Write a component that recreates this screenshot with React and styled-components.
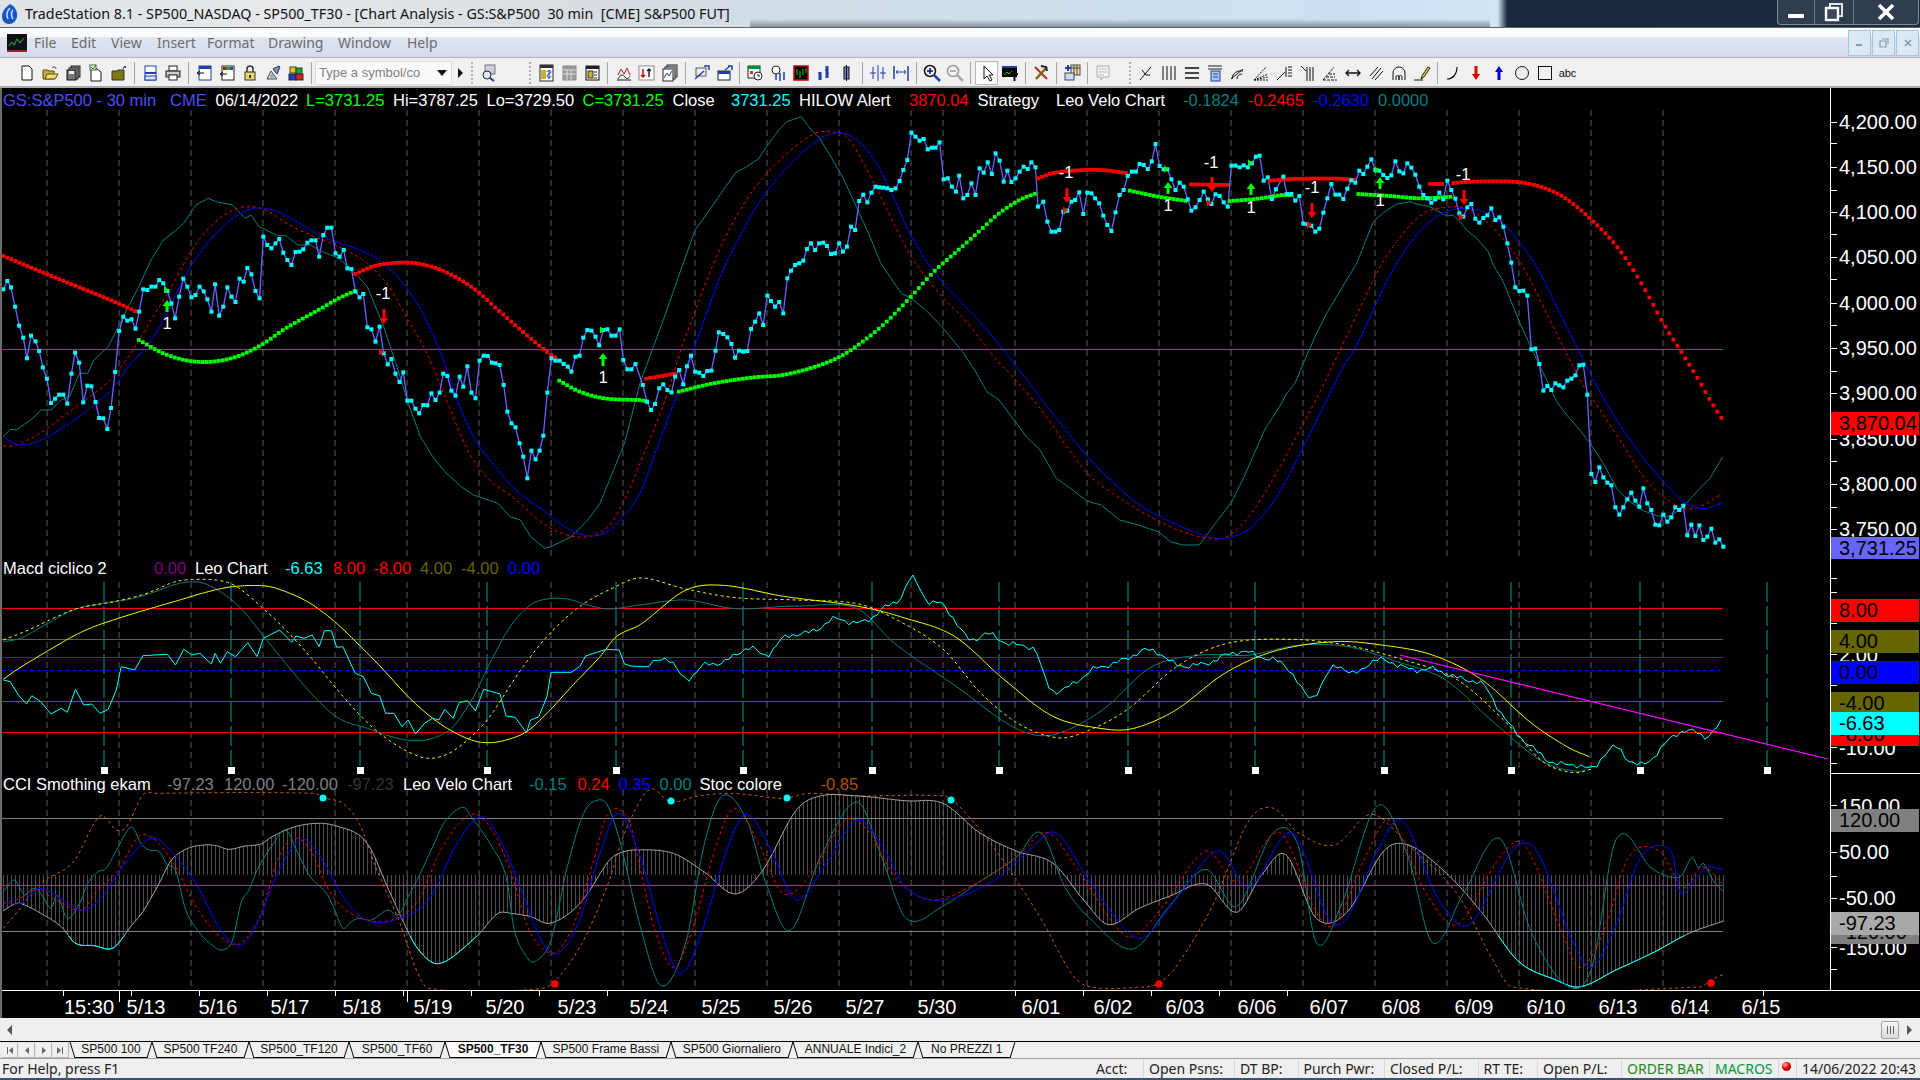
import React from "react";
import styled, { createGlobalStyle } from "styled-components";

const GlobalStyle = createGlobalStyle`
  html, body { margin: 0; padding: 0; background: #000; }
  body { font-family: "Liberation Sans", Arial, sans-serif; }
`;

// ---- data helpers: points were read off zoomed crops of the chart
const parse = (s) => s.trim().split(/\s+/).map((p) => p.split(",").map(Number));
const upL = (s) => parse(s).map(([x, y]) => [x / 2.45, 90 + y / 3]);
const upM = (s) => parse(s).map(([x, y]) => [640 + x / 2.45, 90 + y / 3]);
const upR = (s) => parse(s).map(([x, y]) => [1240 + x / 3, 90 + y / 3]);
const low = (s) => parse(s).map(([x, y]) => [x / 2.45, 550 + y / 3]);
const full = (s) => parse(s).map(([x, y]) => [x * 1.2245, y * 1.2245]);
const str = (pts) => pts.map(([x, y]) => `${x.toFixed(1)},${y.toFixed(1)}`).join(" ");

const at = (pts, x) => {
  for (let i = 1; i < pts.length; i++) {
    if (x <= pts[i][0]) {
      const [x0, y0] = pts[i - 1];
      const [x1, y1] = pts[i];
      return y0 + ((y1 - y0) * (x - x0)) / (x1 - x0 || 1);
    }
  }
  return pts[pts.length - 1][1];
};
const along = (pts, step = 4) => {
  const out = [];
  for (let x = pts[0][0]; x <= pts[pts.length - 1][0]; x += step) out.push([x, at(pts, x)]);
  return out;
};

// hermite through the read-off points, so the averages are curves and not corners
const smooth = (pts, step = 2) => {
  const slope = (i) => {
    const a = pts[Math.max(i - 1, 0)];
    const b = pts[Math.min(i + 1, pts.length - 1)];
    return (b[1] - a[1]) / (b[0] - a[0] || 1);
  };
  const out = [];
  for (let i = 0; i < pts.length - 1; i++) {
    const [x0, y0] = pts[i];
    const [x1, y1] = pts[i + 1];
    const dx = x1 - x0;
    const n = Math.max(1, Math.ceil(dx / step));
    for (let k = 0; k < n; k++) {
      const t = k / n;
      const h00 = 2 * t ** 3 - 3 * t ** 2 + 1;
      const h10 = t ** 3 - 2 * t ** 2 + t;
      const h01 = -2 * t ** 3 + 3 * t ** 2;
      const h11 = t ** 3 - t ** 2;
      out.push([x0 + t * dx, h00 * y0 + h10 * dx * slope(i) + h01 * y1 + h11 * dx * slope(i + 1)]);
    }
  }
  out.push(pts[pts.length - 1]);
  return out;
};

// the raw oscillators are noisy bar to bar
const rough = (pts, amp) =>
  along(smooth(pts), 4).map(([x, y]) => [x, y + amp * (Math.sin(x * 1.7) + Math.sin(x * 0.63 + 1) + Math.sin(x * 2.9 + 2)) / 2]);

const price = [
  ...upL(`8,598 18,573 27,592 37,650 47,707 57,743 66,805 76,737 87,754 96,783 105,832 115,866 125,939 135,926 145,914 155,914 165,941 175,851 184,788 194,818 204,937 214,887 224,889 234,936 243,984 253,985 263,1017 272,954 282,846 292,723 302,680 312,692 322,688 332,716 341,665 351,598 361,600 371,590 381,590 390,570 400,580 410,603 420,640 429,685 439,620 449,566 459,590 469,622 479,615 489,590 499,604 508,628 518,665 527,583 537,677 547,650 557,592 567,620 577,636 587,566 597,575 606,534 616,553 626,603 636,625 645,440 655,465 665,475 675,460 684,447 694,488 704,510 714,525 724,486 734,485 743,478 753,458 763,451 773,451 782,500 792,435 802,413 812,413 822,490 832,500 842,480 851,535 861,537 871,605 881,622 890,612 900,712 910,718 920,755 930,710 940,790 950,823 959,807 969,851 979,876 988,847 998,932 1008,932 1018,956 1027,970 1037,945 1047,946 1057,910 1067,930 1077,908 1086,851 1096,858 1106,902 1116,917 1126,860 1135,890 1145,829 1155,908 1165,925 1175,812 1185,797 1195,798 1205,818 1214,820 1224,825 1234,885 1243,965 1253,1000 1263,1012 1273,1060 1282,1100 1292,1165 1302,1082 1312,1108 1322,1082 1331,1037 1341,908 1351,805 1361,812 1371,812 1381,822 1391,830 1400,845 1410,800 1420,797 1429,743 1439,720 1449,722 1459,740 1468,766 1478,720 1488,718 1498,737 1508,737 1518,718 1527,810 1537,838 1547,838 1557,822`),
  ...upM(`7,885 17,935 27,960 37,942 47,895 57,883 67,900 77,907 86,860 96,840 106,883 115,829 125,797 135,845 145,848 155,858 165,843 175,842 185,782 193,727 204,732 214,742 224,762 233,803 243,782 253,785 263,783 272,717 282,695 292,670 302,705 312,617 321,633 331,650 341,636 351,670 361,565 370,542 380,525 390,520 400,512 409,477 419,460 429,480 439,460 449,458 458,468 468,492 478,490 488,460 497,485 507,470 517,410 527,420 537,333 547,314 557,337 567,308 577,290 586,292 596,293 606,295 616,300 626,295 636,273 645,240 655,210 665,128 675,140 685,152 695,147 705,178 715,173 724,173 734,157 744,268 754,265 764,290 774,305 782,257 792,325 802,315 812,280 822,315 832,235 842,248 852,217 862,252 871,190 881,212 891,275 900,242 910,276 920,265 930,245 940,230 950,237 959,217 969,232 975,350 988,335 998,395 1008,425 1018,425 1027,420 1037,365 1047,362 1057,335 1066,330 1076,307 1086,372 1096,308 1106,310 1115,325 1125,340 1135,377 1145,405 1155,423 1165,367 1175,315 1185,300 1195,258 1205,245 1215,245 1224,222 1234,225 1244,237 1254,214 1263,162 1273,228 1283,238 1292,238 1302,268 1312,300 1322,278 1332,290 1342,328 1351,362 1361,352 1371,330 1381,305 1391,328 1400,342 1410,313 1420,318 1430,337 1440,350 1449,227 1459,227 1469,232 1479,226 1489,232 1499,220 1509,200 1518,197 1528,272 1538,262 1548,327 1558,298`),
  ...upR(`130,260 141,312 154,312 166,332 178,318 190,401 202,403 214,407 226,425 238,416 250,368 262,325 274,282 286,314 298,314 310,327 322,296 334,271 346,278 358,242 370,252 382,230 394,208 406,240 418,242 430,255 442,264 454,256 466,214 478,244 490,250 502,220 514,233 526,254 538,290 550,315 562,325 574,338 586,328 598,308 610,328 622,272 634,300 646,326 658,370 670,380 682,352 694,342 706,386 718,398 730,384 742,376 754,355 766,390 778,382 790,410 802,460 814,518 826,592 838,603 850,602 862,617 874,778 886,776 898,822 910,902 922,888 934,900 946,880 958,886 970,892 982,872 994,866 1006,856 1018,826 1030,824 1042,914 1054,1152 1066,1176 1078,1132 1090,1162 1102,1178 1114,1186 1126,1252 1138,1274 1150,1252 1162,1228 1174,1208 1186,1232 1198,1250 1210,1195 1222,1240 1234,1260 1246,1304 1258,1306 1270,1274 1282,1295 1294,1282 1306,1252 1318,1260 1330,1247 1342,1336 1354,1304 1366,1338 1378,1306 1390,1350 1402,1340 1414,1316 1426,1358 1438,1348 1450,1370`),
];

const priceTeal = [
  ...upL(`8,1040 25,1018 40,1020 60,1003 80,985 100,960 125,960 150,930 170,920 195,850 215,850 230,810 265,770 290,710 310,660 340,590 370,510 400,450 430,422 450,400 480,345 510,325 530,335 570,345 600,385 615,375 635,410 680,437 700,437 730,465 760,465 790,485 830,505 870,550 900,590 925,665 940,710 970,820 1000,940 1030,1040 1060,1100 1090,1145 1130,1190 1160,1215 1220,1240 1250,1280 1275,1290 1300,1340 1335,1375 1350,1370 1400,1340 1440,1290 1470,1240 1500,1150 1530,1060`),
  ...upM(`0,880 30,780 60,680 100,540 135,420 165,370 190,325 210,290 235,247 255,235 290,207 310,170 340,120 360,95 395,80 420,120 440,145 470,205 500,270 530,350 560,430 590,520 640,610 665,625 700,660 740,710 790,785 820,840 850,905 880,930 910,980 950,1045 980,1080 1020,1165 1060,1200 1095,1233 1130,1245 1175,1290 1215,1303 1270,1325 1300,1355 1330,1365 1370,1365 1410,1300 1450,1235 1480,1160 1530,1020`),
  ...upR(`120,948 140,910 165,880 190,820 225,740 260,670 290,620 320,570 350,520 370,470 400,395 430,368 470,342 510,335 530,342 570,350 620,378 640,375 660,395 680,420 710,445 745,485 760,525 790,575 820,650 840,700 870,765 900,830 920,870 950,935 980,975 1020,1020 1050,1060 1090,1120 1130,1195 1170,1235 1210,1262 1250,1277 1290,1280 1330,1250 1380,1195 1410,1165 1448,1100`),
];
const priceBlue = smooth([
  ...upL(`8,1042 40,1063 70,1062 110,1045 150,1015 200,975 240,935 280,890 320,820 360,770 400,690 440,590 480,505 530,430 570,385 610,358 650,355 690,370 740,405 800,445 860,470 900,490 950,530 1000,600 1040,680 1080,790 1120,930 1160,1040 1200,1110 1260,1195 1330,1260 1390,1315 1440,1337 1480,1330 1520,1290`),
  ...upM(`0,1210 40,1080 80,950 120,820 160,680 200,550 240,450 280,360 320,290 370,220 420,165 460,135 500,130 540,160 580,220 620,320 670,450 730,560 790,640 850,720 910,810 960,890 1030,1000 1100,1105 1170,1190 1230,1250 1300,1295 1380,1335 1430,1345 1490,1320 1530,1270`),
  ...upR(`120,1205 190,1070 250,950 310,830 345,775 400,660 450,555 510,460 570,395 620,365 680,355 730,365 790,400 840,460 890,530 950,650 1010,770 1060,870 1130,990 1200,1090 1270,1175 1330,1235 1380,1255 1410,1253 1448,1237`),
]);
const priceRed = smooth([
  ...upL(`8,1068 30,1068 60,1055 110,1020 170,965 220,920 270,870 320,790 370,690 420,590 470,480 520,405 570,360 610,350 650,360 710,405 770,440 830,470 900,520 950,585 1000,690 1050,800 1100,950 1150,1090 1200,1170 1260,1225 1330,1300 1390,1335 1440,1340 1490,1310 1530,1230`),
  ...upM(`0,1120 40,1000 70,900 100,780 130,680 170,550 210,440 250,350 300,265 370,180 430,130 470,125 510,145 550,225 590,320 630,420 670,510 740,620 800,695 860,790 920,870 990,970 1040,1060 1100,1155 1170,1220 1250,1280 1330,1325 1420,1347 1470,1310 1520,1230`),
  ...upR(`120,1130 185,1010 240,905 300,780 360,655 420,530 490,430 550,370 610,353 680,355 740,395 800,460 860,550 920,670 980,790 1020,870 1080,960 1140,1050 1210,1160 1270,1220 1330,1255 1380,1250 1448,1210`),
]);

const redDots = [
  upL("8,498 100,545 200,595 280,635 340,668"),
  upL("870,552 920,527 980,518 1030,522 1090,545 1160,595 1220,660 1290,735 1350,795 1365,805"),
  upM("15,866 90,850"),
  upM("975,265 1010,250 1060,242 1130,240 1195,250"),
  upM("1350,283 1440,285"),
  upR("90,272 160,267 290,266 350,270"),
  upR("570,282 615,282"),
  upR("640,279 700,275 830,276 900,290 960,315 1010,350 1060,395 1110,445 1160,510 1210,590 1270,700 1320,780 1370,860 1410,930 1450,993"),
];
const greenDots = [
  upL("340,750 400,790 460,812 520,815 580,800 640,765 700,715 780,660 830,625 870,603"),
  [...upL("1370,872 1420,905 1480,925 1560,930"), ...upM("0,930 18,935")],
  upM("95,905 180,880 280,862 350,855 430,830 490,800 540,760 600,700 660,625 720,545 780,480 830,425 880,370 930,330 970,310"),
  upM("1200,302 1270,320 1340,333"),
  [...upM("1445,333 1500,328 1548,320"), ...upR("128,315 156,316")],
  upR("355,312 450,318 540,325 640,320"),
];

// ---- macd pane
const macdYellow = smooth([
  ...low("8,388 40,360 100,315 170,265 220,235 290,205 370,175 440,150 510,125 570,110 650,108 700,125 760,160 820,215 880,285 940,360 1000,440 1060,505 1110,545 1160,572 1200,578 1240,570 1290,545 1340,490 1400,410 1470,320 1510,260"),
  ...full("523,510 560,482 590,478 640,487 700,495 740,505 780,520 820,555 860,585 900,595 925,595 960,580 1000,550 1040,532 1090,524 1130,527 1170,535 1210,555 1250,590 1280,610 1298,618"),
]);
const macdYellowDash = smooth([
  ...low("8,270 70,240 130,205 190,175 280,155 360,130 430,95 490,88 540,92 580,110 640,170 700,240 760,320 810,395 870,480 930,550 1000,605 1050,625 1100,610 1150,565 1200,500 1270,370 1340,260 1420,170 1500,115"),
  ...full("523,472 560,481 600,488 650,490 700,493 730,505 770,530 800,565 830,590 860,602 880,600 920,580 960,545 1000,526 1050,522 1100,527 1150,540 1190,555 1230,590 1260,622 1285,631 1300,628"),
]);
const macdTeal = smooth([
  ...low("8,275 50,265 110,225 180,180 250,160 320,147 380,125 440,100 490,97 540,125 590,175 650,265 710,355 770,440 830,505 900,535 960,560 1010,572 1060,565 1110,530 1160,440 1200,340 1250,230 1300,165 1340,147 1390,147 1440,165 1490,177"),
  ...full("523,494 560,490 600,497 650,495 700,497 730,525 780,560 830,595 860,600 900,580 940,545 980,535 1020,535 1060,527 1100,528 1140,540 1180,555 1220,590 1260,622 1290,630 1300,625"),
]);
const macdCyan = [
  ...low("8,390 25,395 45,435 65,462 78,437 100,455 125,492 150,475 165,487 185,418 205,465 225,462 245,490 265,478 285,420 297,350 330,360 350,317 410,313 430,345 450,298 470,315 490,310 518,342 527,310 540,340 557,305 577,320 607,278 630,320 645,265 685,240 715,277 725,258 745,265 765,255 782,290 795,242 812,242 825,292 840,290 870,370 890,380 910,430 930,437 945,490 965,490 985,530 1000,510 1018,552 1040,520 1060,505 1075,510 1090,478 1110,505 1125,458 1145,452 1165,482 1185,418 1225,432 1240,498 1262,502 1290,548 1300,510 1320,500 1340,440 1350,367 1400,367 1420,350 1435,318 1485,298 1517,300 1530,342 1545,348"),
  ...rough(full("530,545 545,538 560,553 575,545 590,540 610,530 625,535 640,520 660,518 680,505 700,510 720,497 735,490 745,472 758,490 770,495 790,520 805,518 820,525 845,530 852,552 860,565 880,555 900,545 920,537 945,532 960,542 975,545 1000,535 1030,535 1050,545 1070,568 1090,545 1105,550 1120,540 1150,545 1180,550 1210,560 1225,580 1240,600 1255,615 1270,622 1285,625 1300,628 1310,615 1320,610 1330,622 1340,625 1355,612 1370,600 1385,597 1395,600 1408,589"), 3.5),
];

// ---- cci pane
const cciWhite = smooth([
  ...low("8,1082 40,1060 60,1065 100,1090 150,1130 185,1180 230,1187 270,1197 290,1180 320,1130 350,1085 390,1000 420,930 460,895 500,885 530,887 560,898 600,888 640,882 660,865 700,840 740,825 790,820 830,830 880,855 910,900 940,985 990,1120 1020,1190 1060,1238 1090,1235 1130,1200 1175,1150 1220,1090 1250,1090 1300,1100 1345,1120 1400,1085 1440,1030 1490,935 1520,908"),
  ...full("523,694 550,697 575,712 600,730 622,712 650,662 670,650 700,650 740,654 770,656 800,680 830,695 860,705 885,735 905,755 930,742 955,732 985,722 1010,745 1030,715 1050,698 1075,750 1100,745 1130,695 1150,690 1180,712 1210,745 1240,785 1270,800 1290,806 1320,792 1350,778 1380,762 1408,752"),
]);
const cciTeal = smooth([
  ...low("8,1025 35,990 60,1035 80,1015 100,1030 125,1075 140,1035 165,1105 195,1060 215,1000 240,965 260,955 290,890 310,845 325,832 345,880 365,900 390,905 410,945 430,960 455,1080 490,1150 520,1185 545,1200 570,1170 590,1060 610,1020 630,960 670,880 700,840 730,910 760,980 800,1030 820,1080 840,1135 860,1115 880,1105 910,1110 950,1080 975,1095 1000,1040 1030,970 1060,890 1090,815 1135,772 1160,810 1200,880 1240,980 1260,1140 1290,1220 1310,1235 1350,1170 1390,950 1430,790 1465,750 1490,770 1520,880"),
  ...full("523,757 540,805 560,770 575,690 590,650 610,670 625,720 645,760 670,700 700,655 720,700 740,750 770,740 800,720 830,700 850,680 870,725 890,750 925,775 955,740 985,710 1010,740 1040,680 1060,690 1075,770 1095,740 1125,658 1150,700 1170,770 1195,730 1225,685 1250,760 1280,805 1300,790 1320,685 1350,710 1372,716 1382,700 1387,709 1391,705 1399,719 1407,728"),
]);
const cciRed = smooth([
  ...low("8,1060 40,1050 90,1018 130,1045 200,1080 240,1020 290,960 340,860 380,870 430,950 480,1070 540,1160 590,1180 640,1090 680,930 720,865 760,900 810,1030 860,1090 920,1115 980,1100 1030,1040 1080,900 1150,795 1200,830 1250,960 1300,1150 1360,1208 1410,1110 1450,950 1490,790 1540,810"),
  ...full("523,710 535,760 550,790 565,760 585,690 600,660 620,690 640,730 665,710 690,670 710,680 730,715 760,735 800,720 830,700 855,680 880,710 910,755 925,765 950,740 985,695 1010,720 1045,680 1075,745 1090,755 1115,700 1135,670 1165,730 1190,755 1225,700 1245,690 1275,760 1290,790 1310,760 1330,700 1355,695 1375,725 1390,708 1408,723"),
]);
const cciBlue = smooth([
  ...low("8,1055 50,1060 100,1015 200,1080 250,1040 300,950 370,865 420,905 480,1000 540,1140 590,1185 630,1120 680,970 740,868 790,930 840,1040 900,1112 980,1105 1050,1050 1120,880 1180,800 1230,880 1280,1030 1330,1180 1370,1208 1420,1110 1470,910 1515,790"),
  ...full("523,700 540,760 555,795 570,770 595,690 610,665 630,695 650,735 675,705 700,670 720,690 740,725 770,735 810,720 840,695 862,680 890,720 920,760 935,765 960,735 995,695 1020,725 1055,680 1085,750 1100,750 1125,695 1145,670 1175,735 1200,755 1235,695 1255,695 1285,770 1300,790 1320,755 1340,700 1365,695 1372,729 1388,713 1395,708 1407,710"),
]);
const cciOrange = smooth([
  ...low("8,1135 50,1075 100,1000 180,935 245,798 285,840 310,830 350,735 380,730 770,730 800,745 840,760 880,820 920,950 980,1120 1020,1260 1050,1315 1330,1315 1370,1280 1430,1170 1490,1000 1530,850"),
  ...full("530,645 548,655 570,650 600,648 640,652 660,648 700,650 770,650 780,655 810,690 850,750 875,795 890,806 934,806 946,803 960,790 990,740 1020,670 1040,660 1060,680 1090,690 1120,665 1150,690 1190,730 1217,780 1235,806 1388,806 1398,800 1407,796"),
]);

const gridX = [47, 119, 191, 263, 335, 407, 479, 551, 623, 695, 767, 839, 911, 943, 1015, 1087, 1159, 1231, 1303, 1375, 1447, 1519, 1591, 1663];
const cycleX = [104, 231, 360, 487, 616, 743, 872, 999, 1128, 1255, 1384, 1511, 1640, 1767];

// ---- chrome
const Page = styled.div`
  width: 1920px;
  height: 1080px;
  overflow: hidden;
  display: flex;
  flex-direction: column;
  background: #f0f0f0;
`;

const TitleBar = styled.div`
  height: 28px;
  flex: none;
  display: flex;
  align-items: center;
  box-sizing: border-box;
  border-bottom: 1px solid #5e666c;
  background:
    linear-gradient(0deg, rgba(70, 80, 90, 0.55), rgba(70, 80, 90, 0) 8px) 750px 0 / 740px 100% no-repeat,
    linear-gradient(90deg, #dfe3e6 0%, #e6e8ea 14%, #d8dde2 30%, #cfdfec 50%, #cbe1f3 70%, #d0e5f6 78%, #19293d 78.5%, #1a2b40 100%);
`;

const TitleLogo = styled.svg`
  width: 18px;
  height: 24px;
  margin: 0 6px 0 1px;
  flex: none;
`;

const TitleText = styled.div`
  flex: 1;
  font: 14.3px "Noto Sans", sans-serif;
  color: #111;
  white-space: pre;
`;

const WindowButtons = styled.div`
  display: flex;
  height: 25px;
  margin: 0 1px 3px 0;
  border: 1px solid #7f8a96;
  border-top: none;
  border-radius: 0 0 4px 4px;
  background: #2f3d4e;
`;

const WindowButton = styled.div`
  width: ${(p) => p.$w}px;
  display: flex;
  align-items: center;
  justify-content: center;
  border-left: ${(p) => (p.$first ? "none" : "1px solid #6f7b88")};
  svg { display: block; }
`;

const MenuBar = styled.div`
  height: 30px;
  flex: none;
  display: flex;
  align-items: center;
  box-sizing: border-box;
  border-bottom: 1px solid #aeb3c2;
  background: linear-gradient(180deg, #fafafa 0, #fbfcfd 8px, #dfe4f1 10px, #d6dcec 27px, #cdd3e2 30px);
`;

const MenuLogo = styled.svg`
  width: 20px;
  height: 18px;
  margin: 0 7px;
  flex: none;
`;

const MenuItem = styled.span`
  width: ${(p) => p.$w}px;
  font: 14px "Noto Sans", sans-serif;
  color: #6c6c6c;
`;

const MdiButtons = styled.div`
  margin-left: auto;
  display: flex;
  gap: 1px;
  margin-right: 1px;
`;

const MdiButton = styled.div`
  width: 23px;
  height: 26px;
  box-sizing: border-box;
  border: 1px solid #a9c4d8;
  background: #dbe9f5;
  display: flex;
  align-items: center;
  justify-content: center;
`;

const ToolBar = styled.div`
  height: 30px;
  flex: none;
  display: flex;
  align-items: center;
  box-sizing: border-box;
  padding: 1px 0 0 15px;
  background: #f0f0f0;
  border-bottom: 2px solid #a8a8a8;
`;

const ToolButton = styled.div`
  width: 23px;
  height: 24px;
  flex: none;
  box-sizing: border-box;
  display: flex;
  align-items: center;
  justify-content: center;
  ${(p) => p.$pressed && "background: #fbfbfb; border: 1px solid #b8b8b8;"}
  font: 11px "Liberation Sans", sans-serif;
  color: #111;
`;

const ToolSep = styled.div`
  width: ${(p) => p.$w}px;
  height: 22px;
  flex: none;
  display: flex;
  justify-content: center;
  &::after {
    content: "";
    width: 1px;
    background: #a4a4a4;
  }
`;

const ToolGrip = styled.div`
  width: ${(p) => p.$w}px;
  height: 22px;
  flex: none;
  display: flex;
  justify-content: flex-end;
  &::after {
    content: "";
    width: 2px;
    margin-right: 3px;
    background: repeating-linear-gradient(180deg, #b0b0b0 0 2px, transparent 2px 4px);
  }
`;

const SymbolBox = styled.div`
  width: 137px;
  height: 24px;
  flex: none;
  box-sizing: border-box;
  border: 1px solid #dcdcdc;
  border-radius: 2px;
  background: #fafafa;
  display: flex;
  align-items: center;
  justify-content: space-between;
  padding: 0 4px 0 3px;
  font: 13px "Liberation Sans", sans-serif;
  color: #808080;
`;

const ComboArrow = styled.span`
  width: 0;
  height: 0;
  border-left: 5px solid transparent;
  border-right: 5px solid transparent;
  border-top: 6px solid #111;
`;

const PlayArrow = styled.div`
  width: 16px;
  flex: none;
  display: flex;
  justify-content: center;
  &::after {
    content: "";
    border-top: 5px solid transparent;
    border-bottom: 5px solid transparent;
    border-left: 5px solid #111;
  }
`;

// ---- chart window
const ChartWindow = styled.div`
  height: 930px;
  flex: none;
  display: flex;
  flex-direction: column;
  background: #000;
  border-left: 2px solid #6a6a6a;
`;

const Pane = styled.div`
  height: ${(p) => p.$h}px;
  flex: none;
  display: flex;
`;

const Plot = styled.div`
  width: 1828px;
  flex: none;
  position: relative;
  svg { display: block; }
`;

const PlotText = styled.text`
  font: 16.5px "Liberation Sans", sans-serif;
  fill: #fff;
  text-anchor: middle;
`;

const LegendRow = styled.div`
  position: absolute;
  left: 1px;
  top: ${(p) => p.$top}px;
  display: flex;
  font-size: 16.5px;
  line-height: 20px;
  white-space: nowrap;
`;

const LegendItem = styled.span`
  width: ${(p) => p.$w}px;
  flex: none;
  color: ${(p) => p.$c};
`;

const Axis = styled.div`
  flex: 1;
  position: relative;
  overflow: hidden;
  border-left: 1px solid #fff;
  font-size: 20px;
  line-height: 23px;
  ${(p) => p.$divider && "border-bottom: 1px solid #fff;"}
`;

const AxisTick = styled.div`
  position: absolute;
  left: 0;
  top: ${(p) => p.$y}px;
  width: 6px;
  height: 1px;
  background: #fff;
`;

const AxisLabel = styled.div`
  position: absolute;
  left: 8px;
  top: ${(p) => p.$y - 11}px;
  color: #fff;
`;

const AxisTag = styled.div`
  position: absolute;
  left: 0;
  right: 1px;
  top: ${(p) => p.$top}px;
  height: ${(p) => p.$h}px;
  padding-left: 8px;
  overflow: hidden;
  color: #000;
  background: ${(p) => p.$bg};
`;

const TimeAxis = styled.div`
  height: 28px;
  flex: none;
  position: relative;
  box-sizing: border-box;
  border-top: 1px solid #fff;
  overflow: hidden;
  font-size: 20px;
`;

const TimeTick = styled.div`
  position: absolute;
  top: 0;
  left: ${(p) => p.$x}px;
  width: 1px;
  height: ${(p) => (p.$tall ? 11 : 5)}px;
  background: #fff;
`;

const TimeLabel = styled.div`
  position: absolute;
  top: 5px;
  left: ${(p) => p.$x}px;
  transform: translateX(-50%);
  color: #fff;
  line-height: 23px;
`;

const ScrollBar = styled.div`
  height: 23px;
  flex: none;
  display: flex;
  align-items: center;
  justify-content: space-between;
  padding: 0 8px 0 7px;
  background: #eeeeee;
`;

const ScrollArrow = styled.span`
  border-top: 5px solid transparent;
  border-bottom: 5px solid transparent;
  ${(p) => (p.$left ? "border-right: 5px solid #555;" : "border-left: 5px solid #555;")}
`;

const ScrollEnd = styled.div`
  display: flex;
  align-items: center;
  gap: 8px;
`;

const ScrollThumb = styled.div`
  width: 18px;
  height: 18px;
  box-sizing: border-box;
  border: 1px solid #a0a0a0;
  border-radius: 2px;
  background: linear-gradient(#f6f6f6, #dcdcdc);
  display: flex;
  align-items: center;
  justify-content: center;
  gap: 2px;
  i { width: 1px; height: 8px; background: #666; }
`;

const TabRow = styled.div`
  height: 17px;
  flex: none;
  display: flex;
  box-sizing: border-box;
  border-top: 1px solid #000;
  background: #f0f0f0;
`;

const TabNav = styled.div`
  width: 70px;
  flex: none;
  display: flex;
  padding-left: 1px;
  box-sizing: border-box;
`;

const TabNavButton = styled.div`
  width: 17px;
  box-sizing: border-box;
  border: 1px solid #b4b4b4;
  border-left-color: #e8e8e8;
  border-top-color: #e8e8e8;
  display: flex;
  align-items: center;
  justify-content: center;
  gap: 1px;
  svg { display: block; }
`;

const Tab = styled.div`
  position: relative;
  width: ${(p) => p.$w}px;
  flex: none;
  text-align: center;
  font-size: 12px;
  line-height: 15px;
  color: #111;
  white-space: nowrap;
  font-weight: ${(p) => (p.$active ? 700 : 400)};
  background: ${(p) =>
    p.$active
      ? "linear-gradient(#000, #000) center bottom / calc(100% - 10px) 1px no-repeat, linear-gradient(#fff, #fff) center / calc(100% - 6px) 100% no-repeat"
      : "linear-gradient(#000, #000) center bottom / calc(100% - 10px) 1px no-repeat"};
  &::before, &::after {
    content: "";
    position: absolute;
    top: 0;
    bottom: 0;
    width: 1px;
    background: #000;
  }
  &::before { left: 2px; transform: skewX(17deg); }
  &::after { right: 2px; transform: skewX(-17deg); }
`;

const StatusBar = styled.div`
  height: 20px;
  flex: none;
  display: flex;
  box-sizing: border-box;
  border-top: 1px solid #a0a0a0;
  background: #f0eeee;
  font: 14px/19px "Noto Sans", sans-serif;
  color: #222;
`;

const StatusHelp = styled.div`
  flex: 1;
  padding-left: 2px;
`;

const StatusField = styled.div`
  width: ${(p) => p.$w}px;
  flex: none;
  box-sizing: border-box;
  padding-left: 5px;
  display: flex;
  align-items: center;
  white-space: nowrap;
  color: ${(p) => p.$c || "#222"};
  ${(p) => !p.$plain && "border-left: 1px solid #d8d6d6;"}
`;

const StatusLed = styled.span`
  width: 9px;
  height: 9px;
  margin: -4px 0 0 -2px;
  border-radius: 50%;
  background: radial-gradient(circle at 35% 30%, #ffb0b0, #e00000 45%, #700000);
`;

const TaskEdge = styled.div`
  height: 2px;
  flex: none;
  background: #3d5268;
`;

// ---- toolbar icons, drawn on an 18 x 18 grid
const D = { fill: "none", stroke: "#111", strokeWidth: 1 };
const Doc = ({ x = 4, y = 2 }) => <path d={`M${x} ${y}h7l3 3v11H${x}z`} fill="#fff" stroke="#111" />;
const icons = {
  page: <Doc />,
  open: <><path d="M2 6h5l1 1h5v8H2z" fill="#c9a83c" stroke="#5a4a10" /><path d="M4 15l2-5h11l-3 5z" fill="#f0d878" stroke="#5a4a10" /><path d="M11 4c2-2 4-1 4 1" {...D} stroke="#333" /></>,
  saveAll: <><rect x="7" y="2" width="9" height="11" fill="#888" stroke="#222" /><rect x="5" y="4" width="9" height="11" fill="#aaa" stroke="#222" /><rect x="3" y="6" width="9" height="10" fill="#777" stroke="#111" /><rect x="5" y="7" width="5" height="3" fill="#eee" /></>,
  newCheck: <><path d="M4 5h6l4 3v9H4z" fill="#fff" stroke="#111" /><rect x="3" y="1" width="6" height="5" fill="#f8f8d8" stroke="#555" /><path d="M4 3l2 2 3-4" {...D} stroke="#0a8a0a" /></>,
  folderUp: <><path d="M2 7h5l1-1h6v10H2z" fill="#7c7a10" stroke="#333" /><path d="M13 5l2-3 1 2" {...D} stroke="#222" /></>,
  preview: <><rect x="4" y="2" width="11" height="14" fill="#fff" stroke="#1c3fa8" /><rect x="4" y="8" width="11" height="2" fill="#1c3fa8" /><rect x="4" y="12" width="11" height="4" fill="#d8e2f6" stroke="#1c3fa8" /></>,
  print: <><rect x="5" y="2" width="8" height="5" fill="#fff" stroke="#222" /><rect x="2" y="7" width="14" height="6" fill="#aaa" stroke="#222" /><rect x="5" y="11" width="8" height="5" fill="#fff" stroke="#222" /><path d="M3 9h12" stroke="#eee" /></>,
  winBack: <><rect x="4" y="2" width="12" height="14" fill="#fff" stroke="#1c3fa8" /><rect x="4" y="2" width="12" height="3" fill="#1c3fa8" /><path d="M9 9H3m2-2l-3 2 3 2" {...D} stroke="#111" /></>,
  winColor: <><rect x="4" y="2" width="12" height="14" fill="#fff" stroke="#222" /><rect x="5" y="3" width="3" height="3" fill="#d00" /><rect x="8" y="3" width="4" height="3" fill="#0a0" /><rect x="12" y="3" width="3" height="3" fill="#05c" /><path d="M9 10H3m2-2l-3 2 3 2" {...D} stroke="#111" /></>,
  lock: <><path d="M6 9V5c0-4 6-4 6 0v4" {...D} strokeWidth="1.5" stroke="#333" /><rect x="4" y="8" width="10" height="8" fill="#e8d860" stroke="#333" /><rect x="8" y="11" width="2" height="3" fill="#333" /></>,
  wizard: <><path d="M9 5l6-3 1 1-3 7z" fill="#7a90c8" stroke="#234" /><path d="M3 15l4-8 6 8z" fill="#ddd" stroke="#445" /><circle cx="8" cy="12" r="2" fill="#8ab" /></>,
  cubes: <><rect x="3" y="3" width="6" height="6" fill="#e8c820" stroke="#442" /><rect x="9" y="4" width="6" height="6" fill="#20a030" stroke="#242" /><rect x="2" y="10" width="7" height="6" fill="#2040c0" stroke="#224" /><rect x="9" y="10" width="7" height="6" fill="#d02020" stroke="#422" /></>,
  searchWin: <><rect x="6" y="1" width="10" height="9" fill="#ccd" stroke="#778" /><circle cx="8" cy="11" r="4" fill="#dfefff" stroke="#222" /><path d="M11 14l4 3" stroke="#1c3fa8" strokeWidth="2" /></>,
  sheetD: <><rect x="3" y="1" width="13" height="16" fill="#fff" stroke="#222" /><rect x="3" y="1" width="13" height="3" fill="#333" /><rect x="4" y="6" width="5" height="9" fill="#c9b030" /><path d="M12 6v9M10 8c0-2 4-2 4 0s-4 2-4 4 4 2 4 0" {...D} stroke="#1c3fa8" /></>,
  sheetGray: <><rect x="3" y="2" width="13" height="14" fill="#9a9a9a" stroke="#888" /><path d="M3 6h13M3 10h13M7 6v10M11 6v10" stroke="#ddd" /></>,
  sheetText: <><rect x="3" y="2" width="13" height="14" fill="#fff" stroke="#111" /><rect x="3" y="2" width="13" height="3" fill="#222" /><rect x="5" y="7" width="5" height="7" fill="#c9b030" stroke="#333" /><path d="M11 8h3M11 11h3M11 14h3" stroke="#333" /></>,
  chartWave: <><path d="M3 11l3-6 3 5 3-6 3 7" {...D} stroke="#c02020" /><path d="M3 15c3-5 5-5 7-2s4 1 5-1M2 16h14" {...D} stroke="#222" /></>,
  upDown: <><rect x="1" y="2" width="15" height="14" fill="#fff" stroke="#888" /><path d="M5 5v8M3 11l2 2 2-2" {...D} stroke="#c00" strokeWidth="1.5" /><path d="M11 13V5M9 7l2-2 2 2" {...D} stroke="#222" strokeWidth="1.5" /></>,
  stack: <><rect x="6" y="1" width="10" height="12" fill="#ccc" stroke="#222" /><rect x="4" y="3" width="10" height="12" fill="#ddd" stroke="#222" /><rect x="2" y="5" width="10" height="12" fill="#fff" stroke="#222" /><path d="M3 14l3-5 2 3 3-5" {...D} stroke="#1c3fa8" /></>,
  hand1: <><rect x="4" y="4" width="10" height="8" fill="#eee" stroke="#555" /><path d="M3 15l9-8M12 2h5v4" {...D} stroke="#1c3fa8" strokeWidth="1.5" /></>,
  hand2: <><rect x="3" y="7" width="12" height="9" fill="#fff" stroke="#222" /><rect x="3" y="7" width="12" height="3" fill="#1c3fa8" /><path d="M10 6l5-4M13 2h4v4" {...D} stroke="#1c3fa8" strokeWidth="1.5" /></>,
  calClock: <><rect x="2" y="2" width="12" height="12" fill="#fff" stroke="#222" /><rect x="2" y="2" width="12" height="3" fill="#0a8a3a" /><circle cx="12" cy="12" r="4" fill="#fff" stroke="#222" /><path d="M12 10v2h2" {...D} /><rect x="4" y="7" width="3" height="3" fill="#c33" /></>,
  searchBars: <><circle cx="7" cy="6" r="4" fill="#fff" stroke="#222" /><path d="M7 10v6M11 9v8M15 8v8" {...D} stroke="#1c3fa8" strokeWidth="1.5" /></>,
  chartBox: <><rect x="2" y="2" width="14" height="14" fill="#000" stroke="#c00" strokeWidth="1.5" /><path d="M5 5v6M8 7v7M11 5v6M14 4v5" stroke="#0c0" /></>,
  bars1: <><path d="M5 8v8M12 2v12" stroke="#1c3fa8" strokeWidth="3" /><path d="M3 9h2M7 13h-2M10 6h2M14 9h-2" stroke="#1c3fa8" /></>,
  bars2: <><rect x="6" y="3" width="5" height="12" fill="#6c7fb8" stroke="#112" /><path d="M8.5 1v16" stroke="#112" /></>,
  squeeze: <><path d="M4 3v12M9 1v16M14 3v12" stroke="#1c3fa8" /><path d="M1 9h6M17 9h-6" stroke="#1c3fa8" /></>,
  spread: <><path d="M2 2v13M16 2v15" stroke="#1c3fa8" strokeWidth="1.5" /><path d="M4 8h10M6 6L4 8l2 2M12 6l2 2-2 2" {...D} stroke="#1c3fa8" /></>,
  zoomIn: <><circle cx="7" cy="7" r="5.5" fill="#eef6ff" stroke="#111" strokeWidth="1.5" /><path d="M4 7h6M7 4v6" stroke="#0a0a80" strokeWidth="1.5" /><path d="M11 11l6 6" stroke="#1c3fa8" strokeWidth="2.5" /></>,
  zoomOut: <><circle cx="7" cy="7" r="5.5" fill="#f4f4f4" stroke="#999" strokeWidth="1.5" /><path d="M4 7h6" stroke="#999" strokeWidth="1.5" /><path d="M11 11l6 6" stroke="#aaa" strokeWidth="2.5" /></>,
  cursor: <path d="M6 2v13l3-3 3 5 2-1-3-5h4z" fill="#fff" stroke="#111" />,
  textChart: <><rect x="1" y="2" width="15" height="11" fill="#000" /><rect x="1" y="2" width="15" height="2" fill="#1c3fa8" /><path d="M3 11l3-3 2 2 3-3" {...D} stroke="#0c0" /><path d="M10 10h7M13.5 10v7" stroke="#111" strokeWidth="2" /></>,
  tools: <><path d="M3 3l12 12" stroke="#b03020" strokeWidth="2" /><path d="M15 3L4 15" stroke="#7a6a10" strokeWidth="2.5" /><path d="M9 2l5 1 1 4" {...D} stroke="#222" strokeWidth="2" /></>,
  plusSheet: <><rect x="8" y="1" width="9" height="10" fill="#f2e8a0" stroke="#444" /><path d="M8 4h9M11 1v10M14 1v10" stroke="#444" /><path d="M5 1v6M2 4h6" stroke="#1c3fa8" strokeWidth="2" /><rect x="2" y="9" width="9" height="7" fill="#cde" stroke="#445" /></>,
  noteGray: <><path d="M3 2h12v11H9l-2 3v-3H3z" fill="#f4f4f4" stroke="#aaa" /><path d="M5 5h8M5 8h8M5 11h5" stroke="#bbb" /></>,
  trend: <path d="M3 16L14 3M5 6l4 5 4 0" {...D} />,
  vLines: <path d="M3 2v14M7 2v14M11 2v14M15 2v14" {...D} />,
  hLines: <path d="M2 4h14M2 9h14M2 14h14" {...D} strokeWidth="1.5" />,
  fibCalc: <><path d="M2 2h14M2 5h14" {...D} stroke="#222" /><rect x="5" y="7" width="9" height="10" fill="#aac8ee" stroke="#1c3fa8" /><path d="M7 10h5M7 13h5" stroke="#1c3fa8" /></>,
  arcLine: <path d="M2 15L14 5M3 15c0-6 6-9 11-8M8 15c0-3 2-5 5-5" {...D} />,
  fan: <path d="M2 16h14M2 16L14 3M2 16l14-6M2 16l14-3" {...D} strokeDasharray="2 1" />,
  ladder: <path d="M2 16L10 8M11 3v10M13 3h4M13 6h4M13 9h4M13 12h4" {...D} />,
  fork: <path d="M3 2l5 5M9 3v14M12 3v14M15 3v14" {...D} />,
  angle: <path d="M2 16L13 3M2 16h14M5 13h9M8 10h6" {...D} strokeDasharray="3 1" />,
  arrows: <path d="M2 9h14M5 6L2 9l3 3M13 6l3 3-3 3" {...D} strokeWidth="1.3" />,
  slashes: <path d="M3 12l8-9M5 15l9-11M8 16l8-9" {...D} />,
  arcs: <path d="M3 16V9a6 6 0 0 1 12 0v7M6 16v-3a1.5 1.5 0 0 1 3 0v3 -3a1.5 1.5 0 0 1 3 0v3" {...D} />,
  pencil: <><path d="M1 16h9" {...D} /><path d="M9 12l6-9 2 1-6 9-3 2z" fill="#f0d020" stroke="#222" /></>,
  curve: <path d="M3 15c5 0 10-4 10-12" {...D} strokeWidth="1.2" />,
  downRed: <path d="M7.5 2h3v8H13l-4 6-4-6h2.5z" fill="#e00000" />,
  upBlue: <path d="M7.5 16h3V8H13L9 2 5 8h2.5z" fill="#0000e0" />,
  circle: <circle cx="9" cy="9" r="6.5" {...D} />,
  square: <rect x="2.5" y="2.5" width="13" height="13" {...D} />,
};

const Tool = ({ name, pressed }) => (
  <ToolButton $pressed={pressed}>
    <svg width="18" height="18" viewBox="0 0 18 18">{icons[name]}</svg>
  </ToolButton>
);

const Tools = ({ names }) => names.map((n) => <Tool key={n} name={n} />);

const MainToolBar = () => (
  <ToolBar>
    <Tools names={["page", "open", "saveAll", "newCheck", "folderUp"]} />
    <ToolSep $w={8} />
    <Tools names={["preview", "print"]} />
    <ToolSep $w={8} />
    <Tools names={["winBack", "winColor", "lock", "wizard", "cubes"]} />
    <ToolSep $w={8} />
    <SymbolBox>Type a symbol/co<ComboArrow /></SymbolBox>
    <PlayArrow />
    <ToolGrip $w={8} />
    <Tools names={["searchWin"]} />
    <ToolGrip $w={35} />
    <Tools names={["sheetD", "sheetGray", "sheetText"]} />
    <ToolSep $w={9} />
    <Tools names={["chartWave", "upDown"]} />
    <Tools names={["stack"]} />
    <ToolSep $w={8} />
    <Tools names={["hand1", "hand2"]} />
    <ToolSep $w={8} />
    <Tools names={["calClock", "searchBars", "chartBox", "bars1", "bars2"]} />
    <ToolSep $w={8} />
    <Tools names={["squeeze", "spread"]} />
    <ToolSep $w={8} />
    <Tools names={["zoomIn", "zoomOut"]} />
    <ToolSep $w={9} />
    <Tool name="cursor" pressed />
    <Tools names={["textChart"]} />
    <ToolSep $w={8} />
    <Tools names={["tools"]} />
    <ToolSep $w={8} />
    <Tools names={["plusSheet"]} />
    <ToolSep $w={8} />
    <Tools names={["noteGray"]} />
    <ToolGrip $w={20} />
    <Tools names={["trend", "vLines", "hLines", "fibCalc", "arcLine", "fan", "ladder", "fork", "angle", "arrows", "slashes", "arcs", "pencil"]} />
    <ToolSep $w={8} />
    <Tools names={["curve", "downRed", "upBlue", "circle", "square"]} />
    <ToolButton>abc</ToolButton>
  </ToolBar>
);

// ---- chart pieces
const GridLines = ({ y1, y2 }) =>
  gridX.map((x) => <line key={x} x1={x} x2={x} y1={y1} y2={y2} stroke="#5a5a5a" strokeDasharray="6 4" />);

const Line = ({ pts, c, dash, w = 1 }) => (
  <polyline points={str(pts)} fill="none" stroke={c} strokeWidth={w} strokeDasharray={dash} strokeLinejoin="round" />
);

const Dots = ({ pts, c, size = 4 }) =>
  pts.map(([x, y], i) => <rect key={i} x={x - size / 2} y={y - size / 2} width={size} height={size} fill={c} />);

const Rule = ({ y, c, dash }) => (
  <line x1="2" x2="1723" y1={y} y2={y} stroke={c} strokeDasharray={dash} strokeWidth="1" shapeRendering="crispEdges" />
);

const Arrow = ({ x, y1, y2, c }) => {
  const dir = y2 > y1 ? 1 : -1;
  return <path d={`M${x - 1.5} ${y1}h3V${y2 - dir * 6}h3L${x} ${y2}l-4.5 ${-dir * 6}h3z`} fill={c} />;
};

const Tick = ({ x, y, c, dir }) => <path d={`M${x} ${y - 3.5}v7l${dir * 5} -3.5z`} fill={c} />;

const frame = (top, h) => ({ width: 1828, height: h, viewBox: `2 ${top} 1828 ${h}` });

const PriceSvg = () => (
  <svg {...frame(88, 471)}>
    <GridLines y1={110} y2={556} />
    <Rule y={349} c="#008080" />
    <Line pts={priceTeal} c="#008080" />
    <Line pts={priceRed} c="#ff0000" dash="3 3" />
    <Line pts={priceBlue} c="#0000ff" />
    <Line pts={price} c="#6666ff" w={1.3} />
    {redDots.map((p, i) => <Dots key={i} pts={along(smooth(p))} c="#ff0000" size={3.8} />)}
    {greenDots.map((p, i) => <Dots key={i} pts={along(smooth(p))} c="#00ff00" size={3.8} />)}
    <Dots pts={price} c="#00ffff" />
    {[[167, 300, 312], [603, 353, 366], [1168, 182, 194], [1251, 183, 195], [1380, 177, 189]].map(([x, a, b]) => (
      <Arrow key={x} x={x} y1={b} y2={a} c="#00ff00" />
    ))}
    {[[384, 309, 324], [1067, 188, 203], [1212, 177, 192], [1312, 203, 218], [1464, 190, 205]].map(([x, a, b]) => (
      <Arrow key={x} x={x} y1={a} y2={b} c="#ff0000" />
    ))}
    {[[164, 290], [600, 330], [1164, 169], [1248, 163], [1375, 170]].map(([x, y]) => (
      <Tick key={x} x={x} y={y} c="#00ff00" dir={1} />
    ))}
    {[[379, 352], [1063, 210], [1207, 203], [1307, 225], [1459, 217]].map(([x, y]) => (
      <Tick key={x} x={x} y={y} c="#ff0000" dir={1} />
    ))}
    {[[167, 329], [603, 383], [1168, 211], [1251, 213], [1380, 206]].map(([x, y]) => (
      <PlotText key={x} x={x} y={y}>1</PlotText>
    ))}
    {[[383, 299], [1066, 178], [1211, 168], [1312, 193], [1463, 180]].map(([x, y]) => (
      <PlotText key={x} x={x} y={y}>-1</PlotText>
    ))}
  </svg>
);

const MacdSvg = () => (
  <svg {...frame(559, 215)}>
    <GridLines y1={582} y2={772} />
    {cycleX.map((x) => (
      <g key={x}>
        <line x1={x} x2={x} y1="582" y2="766" stroke="#008080" strokeWidth="1.2" strokeDasharray="20 4" />
        <rect x={x - 3} y={767} width="7" height="7" fill="#fff" />
      </g>
    ))}
    <Rule y={608} c="#ff0000" />
    <Rule y={639} c="#666600" />
    <Rule y={657} c="#800080" />
    <Rule y={670} c="#0000ff" dash="4 3" />
    <Rule y={701} c="#666600" />
    <Rule y={732} c="#ff0000" />
    <Line pts={macdTeal} c="#008080" />
    <Line pts={macdYellowDash} c="#ffff00" dash="3 3" />
    <Line pts={macdYellow} c="#ffff00" />
    <Line pts={macdCyan} c="#00ffff" />
    <line x1="1400" x2="1828" y1="655" y2="759" stroke="#ff00ff" strokeWidth="1.2" />
  </svg>
);

const CciSvg = () => (
  <svg {...frame(774, 216)}>
    <defs>
      <clipPath id="below"><rect x="0" y="936" width="1830" height="60" /></clipPath>
    </defs>
    <GridLines y1={790} y2={990} />
    {along(cciWhite).map(([x, y]) => (
      <line key={x} x1={x} x2={x} y1={875} y2={y} stroke="#4c4c4c" strokeWidth="1" shapeRendering="crispEdges" />
    ))}
    <Rule y={818} c="#808080" />
    <Rule y={885} c="#008080" />
    <Rule y={931} c="#808080" />
    <Line pts={cciOrange} c="#d06000" dash="3 3" />
    <Line pts={cciWhite} c="#a8a8a8" />
    <g clipPath="url(#below)"><Line pts={cciWhite} c="#00ffff" /></g>
    <Line pts={cciTeal} c="#008080" />
    <Line pts={cciRed} c="#ff0000" dash="3 3" />
    <Line pts={cciBlue} c="#0000ff" />
    {[[323, 798], [671, 801], [787, 798], [951, 800]].map(([x, y]) => <circle key={x} cx={x} cy={y} r="3.5" fill="#00ffff" />)}
    {[[555, 984], [1159, 984], [1711, 983]].map(([x, y]) => <circle key={x} cx={x} cy={y} r="3.8" fill="#ff0000" />)}
  </svg>
);

const Legend = ({ top, items }) => (
  <LegendRow $top={top}>
    {items.map(([t, c, w], i) => <LegendItem key={i} $c={c} $w={w}>{t}</LegendItem>)}
  </LegendRow>
);

const ticks = (list, top) => list.map((y) => <AxisTick key={y} $y={y - top} />);
const labels = (list, top) => list.map(([t, y]) => <AxisLabel key={t} $y={y - top}>{t}</AxisLabel>);

const priceLabels = ["4,200.00", "4,150.00", "4,100.00", "4,050.00", "4,000.00", "3,950.00", "3,900.00", "3,850.00", "3,800.00", "3,750.00"]
  .map((t, i) => [t, 121.5 + 45.3 * i]);

const timeLabels = [["15:30", 89], ["5/13", 146], ["5/16", 218], ["5/17", 290], ["5/18", 362], ["5/19", 433], ["5/20", 505], ["5/23", 577], ["5/24", 649], ["5/25", 721], ["5/26", 793], ["5/27", 865], ["5/30", 937], ["6/01", 1041], ["6/02", 1113], ["6/03", 1185], ["6/06", 1257], ["6/07", 1329], ["6/08", 1401], ["6/09", 1474], ["6/10", 1546], ["6/13", 1618], ["6/14", 1690], ["6/15", 1761]];
const timeTicks = [63, 131, 199, 267, 335, 403, 471, 539, 607, 1015, 1083, 1151, 1219, 1287, 1763];

const tabs = [["SP500 100", 82], ["SP500 TF240", 97], ["SP500_TF120", 100], ["SP500_TF60", 96], ["SP500_TF30", 96, true], ["SP500 Frame Bassi", 129.6], ["SP500 Giornaliero", 122.4], ["ANNUALE Indici_2", 125], ["No PREZZI 1", 97.5]];

const NavGlyph = ({ d }) => <svg width="9" height="11" viewBox="0 0 9 11"><path d={d} fill="#666" /></svg>;

export default function App() {
  return (
    <Page>
      <GlobalStyle />
      <TitleBar>
        <TitleLogo viewBox="0 0 18 24">
          <path d="M9 2c5 2 8 8 7 13-1 4-4 7-8 7-5 0-7-4-7-8C1 9 5 5 9 2z" fill="#1a55c8" />
          <path d="M9 6c-3 3-4 7-2 11M12 8c-2 2-2 6 0 9" fill="none" stroke="#bfe0ff" strokeWidth="1.6" />
        </TitleLogo>
        <TitleText>TradeStation 8.1 - SP500_NASDAQ - SP500_TF30 - [Chart Analysis - GS:S&amp;P500  30 min  [CME] S&amp;P500 FUT]</TitleText>
        <WindowButtons>
          <WindowButton $w={36} $first>
            <svg width="16" height="14" viewBox="0 0 16 14"><rect x="0" y="9" width="16" height="4" fill="#fff" /></svg>
          </WindowButton>
          <WindowButton $w={38}>
            <svg width="20" height="20" viewBox="0 0 20 20"><rect x="6" y="2" width="12" height="12" fill="none" stroke="#dfe6ee" strokeWidth="2" /><rect x="2" y="6" width="12" height="12" fill="#3b4a5b" stroke="#fff" strokeWidth="2.4" /></svg>
          </WindowButton>
          <WindowButton $w={64}>
            <svg width="20" height="18" viewBox="0 0 20 18"><path d="M3 2l14 14M17 2L3 16" stroke="#fff" strokeWidth="3.6" /></svg>
          </WindowButton>
        </WindowButtons>
      </TitleBar>

      <MenuBar>
        <MenuLogo viewBox="0 0 20 18">
          <rect width="20" height="18" fill="#101018" />
          <path d="M2 12l3-4 2 3 3-6 3 4 4-5" fill="none" stroke="#22c040" />
          <rect y="16" width="20" height="2" fill="#a02020" />
        </MenuLogo>
        {[["File", 37], ["Edit", 40], ["View", 46], ["Insert", 50], ["Format", 61], ["Drawing", 70], ["Window", 69], ["Help", 40]].map(([t, w]) => (
          <MenuItem key={t} $w={w}>{t}</MenuItem>
        ))}
        <MdiButtons>
          <MdiButton><svg width="10" height="10" viewBox="0 0 10 10"><rect x="1" y="6" width="6" height="2" fill="#8a9aa8" /></svg></MdiButton>
          <MdiButton><svg width="10" height="10" viewBox="0 0 10 10"><path d="M3 1h6v5M1 3h6v6H1z" fill="none" stroke="#8a9aa8" strokeWidth="1.2" /></svg></MdiButton>
          <MdiButton><svg width="10" height="10" viewBox="0 0 10 10"><path d="M2 2l6 6M8 2L2 8" stroke="#8a9aa8" strokeWidth="1.6" /></svg></MdiButton>
        </MdiButtons>
      </MenuBar>

      <MainToolBar />

      <ChartWindow>
        <Pane $h={471}>
          <Plot>
            <PriceSvg />
            <Legend
              top={2}
              items={[
                ["GS:S&P500 - 30 min", "#4d4df0", 167], ["CME", "#4d4df0", 45.5], ["06/14/2022", "#fff", 90.5],
                ["L=3731.25", "#00ff00", 87], ["Hi=3787.25", "#fff", 93.5], ["Lo=3729.50", "#fff", 96],
                ["C=3731.25", "#00ff00", 90], ["Close", "#fff", 58.5], ["3731.25", "#00ffff", 68],
                ["HILOW Alert", "#fff", 110], ["3870.04", "#ff0000", 68.5], ["Strategy", "#fff", 78.5],
                ["Leo Velo Chart", "#fff", 127], ["-0.1824", "#008080", 65], ["-0.2465", "#ff0000", 65],
                ["-0.2630", "#0000ff", 65], ["0.0000", "#008080", 70],
              ]}
            />
          </Plot>
          <Axis>
            {labels(priceLabels, 88)}
            {ticks(priceLabels.map(([, y]) => Math.round(y)), 88)}
            {ticks([143, 190, 234, 279, 325, 371, 416, 461, 507, 558], 88)}
            <AxisTag $top={324} $h={23} $bg="#ff0000">3,870.04</AxisTag>
            <AxisTag $top={449} $h={23} $bg="#6666ff">3,731.25</AxisTag>
          </Axis>
        </Pane>
        <Pane $h={215}>
          <Plot>
            <MacdSvg />
            <Legend
              top={-1}
              items={[
                ["Macd ciclico 2", "#fff", 151], ["0.00", "#800080", 41], ["Leo Chart", "#fff", 90],
                ["-6.63", "#00ffff", 48], ["8.00", "#ff0000", 40.5], ["-8.00", "#ff0000", 46.5],
                ["4.00", "#666600", 41], ["-4.00", "#666600", 47], ["0.00", "#0000ff", 50],
              ]}
            />
          </Plot>
          <Axis $divider>
            {ticks([578, 592, 623, 654, 685, 747, 763], 559)}
            {labels([["2.00", 655], ["-10.00", 748]], 559)}
            <AxisTag $top={164} $h={23} $bg="#ff0000">-8.00</AxisTag>
            <AxisTag $top={40} $h={23} $bg="#ff0000">8.00</AxisTag>
            <AxisTag $top={71} $h={23} $bg="#666600">4.00</AxisTag>
            <AxisTag $top={102} $h={23} $bg="#0000ff">0.00</AxisTag>
            <AxisTag $top={133} $h={23} $bg="#666600">-4.00</AxisTag>
            <AxisTag $top={153} $h={23} $bg="#00ffff">-6.63</AxisTag>
          </Axis>
        </Pane>
        <Pane $h={216}>
          <Plot>
            <CciSvg />
            <Legend
              top={0}
              items={[
                ["CCI Smothing ekam", "#fff", 164], ["-97.23", "#808080", 57], ["120.00", "#808080", 58],
                ["-120.00", "#808080", 65], ["-97.23", "#333", 56], ["Leo Velo Chart", "#fff", 126],
                ["-0.15", "#008080", 48.5], ["0.24", "#ff0000", 41], ["0.35", "#0000ff", 41],
                ["0.00", "#008080", 40], ["Stoc colore", "#fff", 121], ["-0.85", "#b05000", 50],
              ]}
            />
          </Plot>
          <Axis>
            {ticks([805, 852, 876, 898, 947, 969], 774)}
            {labels([["150.00", 806], ["50.00", 852], ["-50.00", 898], ["-150.00", 948]], 774)}
            <AxisTag $top={35} $h={23} $bg="#808080">120.00</AxisTag>
            <AxisTag $top={147} $h={23} $bg="#808080">-120.00</AxisTag>
            <AxisTag $top={138} $h={23} $bg="#a9a9a9">-97.23</AxisTag>
          </Axis>
        </Pane>
        <TimeAxis>
          {timeTicks.map((x) => <TimeTick key={x} $x={x - 2} />)}
          <TimeTick $x={117} $tall />
          <TimeTick $x={405} $tall />
          {timeLabels.map(([t, x]) => <TimeLabel key={t} $x={x - 2}>{t}</TimeLabel>)}
        </TimeAxis>
      </ChartWindow>

      <ScrollBar>
        <ScrollArrow $left />
        <ScrollEnd>
          <ScrollThumb><i /><i /><i /></ScrollThumb>
          <ScrollArrow />
        </ScrollEnd>
      </ScrollBar>

      <TabRow>
        <TabNav>
          <TabNavButton><NavGlyph d="M2 2h1v7H2zM8 2v7L4 5.5z" /></TabNavButton>
          <TabNavButton><NavGlyph d="M7 2v7L3 5.5z" /></TabNavButton>
          <TabNavButton><NavGlyph d="M3 2v7l4-3.5z" /></TabNavButton>
          <TabNavButton><NavGlyph d="M1 2v7l4-3.5zM6 2h1v7H6z" /></TabNavButton>
        </TabNav>
        {tabs.map(([t, w, active]) => <Tab key={t} $w={w} $active={active}>{t}</Tab>)}
      </TabRow>

      <StatusBar>
        <StatusHelp>For Help, press F1</StatusHelp>
        <StatusField $w={52} $plain>Acct:</StatusField>
        <StatusField $w={91}>Open Psns:</StatusField>
        <StatusField $w={63.5}>DT BP:</StatusField>
        <StatusField $w={86.5}>Purch Pwr:</StatusField>
        <StatusField $w={93.5}>Closed P/L:</StatusField>
        <StatusField $w={59.5}>RT TE:</StatusField>
        <StatusField $w={84}>Open P/L:</StatusField>
        <StatusField $w={88} $c="#1e8a1e">ORDER BAR</StatusField>
        <StatusField $w={69} $c="#009a40">MACROS</StatusField>
        <StatusField $w={18}><StatusLed /></StatusField>
        <StatusField $w={124}>14/06/2022 20:43</StatusField>
      </StatusBar>
      <TaskEdge />
    </Page>
  );
}
